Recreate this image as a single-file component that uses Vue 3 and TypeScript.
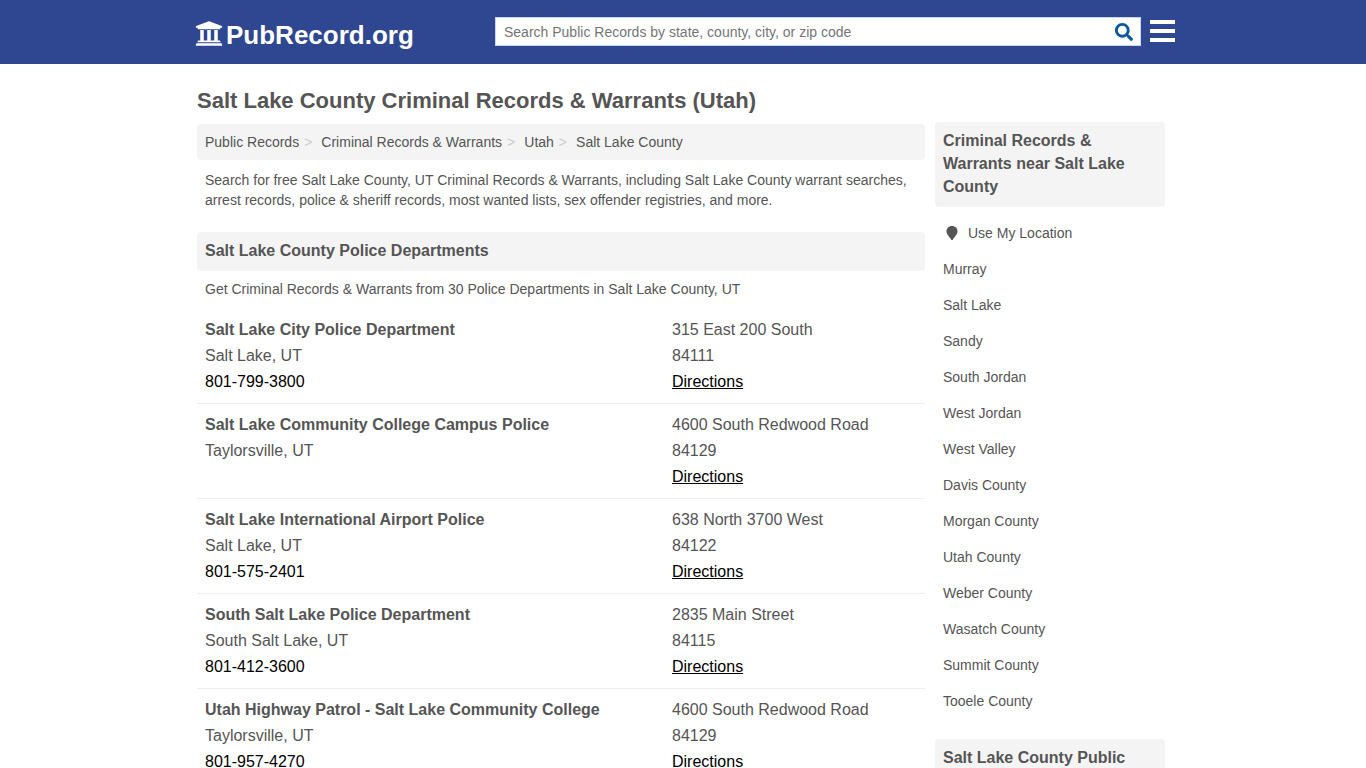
<script setup lang="ts">
interface Department {
  name: string
  city: string
  phone?: string
  street: string
  zip: string
}

const crumbs: string[] = ['Public Records', 'Criminal Records & Warrants', 'Utah', 'Salt Lake County']

const departments: Department[] = [
  { name: 'Salt Lake City Police Department', city: 'Salt Lake, UT', phone: '801-799-3800', street: '315 East 200 South', zip: '84111' },
  { name: 'Salt Lake Community College Campus Police', city: 'Taylorsville, UT', street: '4600 South Redwood Road', zip: '84129' },
  { name: 'Salt Lake International Airport Police', city: 'Salt Lake, UT', phone: '801-575-2401', street: '638 North 3700 West', zip: '84122' },
  { name: 'South Salt Lake Police Department', city: 'South Salt Lake, UT', phone: '801-412-3600', street: '2835 Main Street', zip: '84115' },
  { name: 'Utah Highway Patrol - Salt Lake Community College', city: 'Taylorsville, UT', phone: '801-957-4270', street: '4600 South Redwood Road', zip: '84129' },
]

const places: string[] = [
  'Murray', 'Salt Lake', 'Sandy', 'South Jordan', 'West Jordan', 'West Valley', 'Davis County',
  'Morgan County', 'Utah County', 'Weber County', 'Wasatch County', 'Summit County', 'Tooele County',
]
</script>

<template>
  <div class="page">
    <header class="header">
      <div class="bar">
        <a class="logo" href="#">
          <svg class="logo-icon" viewBox="0 32 512 448" aria-hidden="true">
            <path d="M496 128v16a8 8 0 0 1-8 8h-24v12c0 6.627-5.373 12-12 12H60c-6.627 0-12-5.373-12-12v-12H24a8 8 0 0 1-8-8v-16a8 8 0 0 1 4.941-7.392l232-88a7.996 7.996 0 0 1 6.118 0l232 88A8 8 0 0 1 496 128zm-24 304H40c-13.255 0-24 10.745-24 24v16a8 8 0 0 0 8 8h464a8 8 0 0 0 8-8v-16c0-13.255-10.745-24-24-24zM96 192v192H60c-6.627 0-12 5.373-12 12v20h416v-20c0-6.627-5.373-12-12-12h-36V192h-64v192h-64V192h-64v192h-64V192H96z" />
          </svg>
          <span>PubRecord.org</span>
        </a>
        <div class="tools">
          <form class="search" role="search" @submit.prevent>
            <input type="text" aria-label="Search public records" placeholder="Search Public Records by state, county, city, or zip code" />
            <button type="submit" aria-label="Search">
              <svg class="search-icon" viewBox="0 0 512 512" aria-hidden="true">
                <path d="M505 442.700L405.300 343c-4.500-4.500-10.600-7-17-7H372c27.600-35.300 44-79.700 44-128C416 93.100 322.900 0 208 0S0 93.100 0 208s93.100 208 208 208c48.300 0 92.700-16.400 128-44v16.300c0 6.400 2.500 12.500 7 17l99.700 99.700c9.400 9.400 24.600 9.400 33.900 0l28.300-28.300c9.400-9.400 9.400-24.600.1-34zM208 336c-70.700 0-128-57.200-128-128 0-70.700 57.200-128 128-128 70.700 0 128 57.200 128 128 0 70.700-57.200 128-128 128z" />
              </svg>
            </button>
          </form>
          <button class="menu" type="button" aria-label="Menu"><span /><span /><span /></button>
        </div>
      </div>
    </header>

    <div class="content">
      <main class="main">
        <h1>Salt Lake County Criminal Records &amp; Warrants (Utah)</h1>
        <nav class="crumbs" aria-label="Breadcrumb">
          <a v-for="crumb in crumbs" :key="crumb" href="#">{{ crumb }}</a>
        </nav>
        <p class="intro">
          Search for free Salt Lake County, UT Criminal Records &amp; Warrants, including Salt Lake County warrant
          searches, arrest records, police &amp; sheriff records, most wanted lists, sex offender registries, and more.
        </p>
        <h2>Salt Lake County Police Departments</h2>
        <p class="summary">Get Criminal Records &amp; Warrants from 30 Police Departments in Salt Lake County, UT</p>
        <section v-for="dept in departments" :key="dept.name" class="dept">
          <div class="dept-info">
            <h3>{{ dept.name }}</h3>
            <div>{{ dept.city }}</div>
            <a v-if="dept.phone" :href="`tel:${dept.phone}`">{{ dept.phone }}</a>
          </div>
          <div class="dept-address">
            <div>{{ dept.street }}</div>
            <div>{{ dept.zip }}</div>
            <a class="directions" href="#">Directions</a>
          </div>
        </section>
      </main>

      <aside class="side">
        <h2>Criminal Records &amp; Warrants near Salt Lake County</h2>
        <ul>
          <li>
            <a href="#">
              <svg class="pin" viewBox="0 0 12 16" aria-hidden="true">
                <path d="M6 1C2.800 1 .5 3.200.5 6.200c0 2.900 2.400 4.700 4.600 8.300.4.700 1.400.7 1.800 0 2.200-3.600 4.600-5.400 4.600-8.300C11.500 3.200 9.200 1 6 1z" />
              </svg>
              Use My Location
            </a>
          </li>
          <li v-for="place in places" :key="place"><a href="#">{{ place }}</a></li>
        </ul>
        <h2>Salt Lake County Public</h2>
      </aside>
    </div>
  </div>
</template>

<style>
body {
  margin: 0;
  background: #fff;
}
</style>

<style scoped>
.page {
  height: 100vh;
  overflow: hidden;
  color: #555;
  font-family: "Liberation Sans", Arial, sans-serif;
  font-size: 14px;
  line-height: 20px;
}
.header {
  background: #2e4790;
}
.bar {
  display: flex;
  justify-content: space-between;
  box-sizing: border-box;
  max-width: 984px;
  height: 64px;
  margin: 0 auto;
  padding: 0 0 0 4px;
}
.logo {
  display: flex;
  align-items: center;
  gap: 3px;
  padding-top: 6px;
  color: #fff;
  font-size: 26px;
  font-weight: bold;
  text-decoration: none;
}
.logo-icon {
  width: 28px;
  height: 25px;
  margin-bottom: 3px;
  fill: #fff;
}
.tools {
  display: flex;
  align-items: flex-start;
  gap: 9px;
  width: 70%;
  max-width: 680px;
  padding-top: 17px;
}
.search {
  display: flex;
  flex: 1;
  box-sizing: border-box;
  height: 29px;
  background: #fff;
  border: 1px solid #c5d8ee;
}
.search input {
  flex: 1;
  min-width: 0;
  padding: 0 8px;
  border: 0;
  outline: 0;
  background: none;
  color: #555;
  font: inherit;
}
.search input::placeholder {
  color: #757575;
}
.search button {
  display: flex;
  align-items: center;
  padding: 0 7px;
  border: 0;
  background: none;
}
.search-icon {
  width: 18px;
  height: 18px;
  fill: #0c56a0;
}
.menu {
  display: flex;
  flex-direction: column;
  gap: 5px;
  width: 25px;
  margin-top: 3px;
  padding: 0;
  border: 0;
  background: none;
}
.menu span {
  width: 100%;
  height: 4px;
  background: #fff;
}
.content {
  display: flex;
  gap: 10px;
  box-sizing: border-box;
  max-width: 980px;
  margin: 0 auto;
  padding: 0 8px 0 4px;
}
.main {
  flex: 1;
  min-width: 0;
}
h1 {
  margin: 25px 0 11px;
  font-size: 22px;
  line-height: 24px;
}
.crumbs {
  padding: 8px;
  background: #f4f4f4;
  border-radius: 4px;
}
.crumbs a {
  color: #555;
  text-decoration: none;
}
.crumbs a:not(:last-child)::after {
  content: ">";
  padding: 0 9px 0 5px;
  color: #ccc;
}
.intro {
  margin: 10px 8px 22px;
}
h2 {
  margin: 0;
  padding: 7px 8px 9px;
  background: #f4f4f4;
  border-radius: 4px;
  font-size: 16px;
  line-height: 23px;
}
.summary {
  margin: 8px 8px 10px;
}
.dept {
  display: flex;
  padding: 8px;
  border-bottom: 1px solid #eee;
  font-size: 16px;
  line-height: 26px;
}
.dept-info {
  flex: 0 1 467px;
}
.dept h3 {
  margin: 0;
  font-size: 16px;
}
.dept a {
  color: #000;
  text-decoration: none;
}
.dept .directions {
  text-decoration: underline;
}
.side {
  width: 230px;
  padding-top: 58px;
}
.side ul {
  margin: 8px 0 20px;
  padding: 0;
  list-style: none;
}
.side li a {
  display: flex;
  align-items: center;
  padding: 8px;
  color: #555;
  text-decoration: none;
}
.pin {
  width: 12px;
  height: 16px;
  margin: 0 10px 0 3px;
  fill: #555;
}
</style>
